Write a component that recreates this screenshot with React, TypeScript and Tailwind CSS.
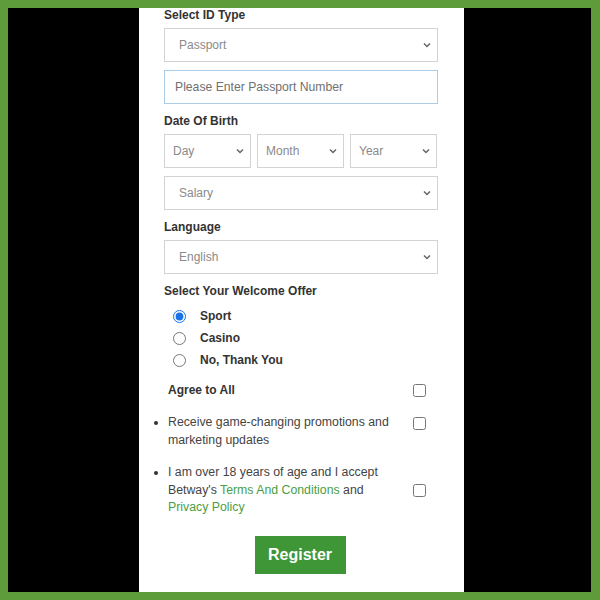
import { useState } from "react";

const Chevron = () => (
  <svg
    className="pointer-events-none absolute right-[6px] top-1/2 -translate-y-1/2"
    width="10"
    height="10"
    viewBox="0 0 10 10"
    fill="none"
  >
    <path d="M2 3.5 L5 6.5 L8 3.5" stroke="#666" strokeWidth="1.5" />
  </svg>
);

function Select({ value, options, pl = "pl-[14px]" }: { value: string; options: string[]; pl?: string }) {
  return (
    <div className="relative w-full">
      <select
        defaultValue={value}
        className={`h-[34px] w-full appearance-none border border-[#d3d3d3] bg-white ${pl} text-[12px] text-[#8a8a8a] outline-none`}
      >
        {options.map((o) => (
          <option key={o}>{o}</option>
        ))}
      </select>
      <Chevron />
    </div>
  );
}

export default function App() {
  const [offer, setOffer] = useState("sport");

  return (
    <div
      className="flex h-[600px] w-[600px] bg-[#5e9b3b] pt-[8px] pb-[8px] pl-[8px] pr-[9px]"
      style={{ fontFamily: '"Liberation Sans", Arial, sans-serif' }}
    >
      <div className="flex flex-1 bg-black">
        <div className="ml-[131px] flex w-[325px] flex-col bg-white pl-[25px] pr-[26px]">
          <label className="block h-[14px] text-[12px] font-bold leading-[14px] text-[#333]">
            Select ID Type
          </label>
          <div className="mt-[6px]">
            <Select value="Passport" options={["Passport", "ID Number"]} />
          </div>
          <input
            placeholder="Please Enter Passport Number"
            className="mt-[8px] h-[34px] w-full border border-[#a9cde8] px-[10px] text-[12.2px] text-[#333] outline-none placeholder:text-[#707070]"
          />

          <label className="mt-[10px] block h-[14px] text-[12px] font-bold leading-[14px] text-[#333]">
            Date Of Birth
          </label>
          <div className="mt-[6px] flex gap-[6px]">
            <div className="w-[87px]">
              <Select value="Day" options={["Day"]} pl="pl-[8px]" />
            </div>
            <div className="w-[87px]">
              <Select value="Month" options={["Month"]} pl="pl-[8px]" />
            </div>
            <div className="w-[87px]">
              <Select value="Year" options={["Year"]} pl="pl-[8px]" />
            </div>
          </div>
          <div className="mt-[8px]">
            <Select value="Salary" options={["Salary"]} />
          </div>

          <label className="mt-[10px] block h-[14px] text-[12px] font-bold leading-[14px] text-[#333]">
            Language
          </label>
          <div className="mt-[6px]">
            <Select value="English" options={["English"]} />
          </div>

          <label className="mt-[10px] block h-[14px] text-[12px] font-bold leading-[14px] text-[#333]">
            Select Your Welcome Offer
          </label>
          <div className="mt-[7px] flex flex-col pl-[9px]">
            {[
              ["sport", "Sport"],
              ["casino", "Casino"],
              ["none", "No, Thank You"],
            ].map(([k, l]) => (
              <label key={k} className="flex h-[22px] items-center text-[12px] font-bold text-[#333]">
                <input
                  type="radio"
                  name="offer"
                  checked={offer === k}
                  onChange={() => setOffer(k)}
                  className="m-0 h-[13px] w-[13px] accent-[#1a73e8]"
                />
                <span className="ml-[14px]">{l}</span>
              </label>
            ))}
          </div>

          <div className="mt-[10px] flex h-[18px] items-center pl-[4px]">
            <span className="w-[245px] text-[12px] font-bold text-[#333]">Agree to All</span>
            <input type="checkbox" className="m-0 h-[13px] w-[13px]" />
          </div>

          <ul className="mt-[15px] flex list-disc flex-col gap-[15px] pl-[4px] text-[12.3px] leading-[17.5px] text-[#444] marker:text-[#333]">
            <li>
              <div className="flex items-start">
                <span className="w-[245px] pr-[15px]">Receive game-changing promotions and marketing updates</span>
                <input type="checkbox" className="m-0 mt-[3px] h-[13px] w-[13px]" />
              </div>
            </li>
            <li>
              <div className="flex items-center">
                <p className="w-[245px] pr-[15px]">
                  I am over 18 years of age and I accept Betway's{" "}
                  <a className="text-[#4a9e45]">Terms And Conditions</a> and{" "}
                  <a className="text-[#4a9e45]">Privacy Policy</a>
                </p>
                <input type="checkbox" className="m-0 h-[13px] w-[13px]" />
              </div>
            </li>
          </ul>

          <div className="mt-[19px] flex justify-center pr-[2px]">
            <button className="h-[38px] w-[91px] bg-[#3e9637] text-[16px] font-bold text-white">
              Register
            </button>
          </div>
        </div>
      </div>
    </div>
  );
}
